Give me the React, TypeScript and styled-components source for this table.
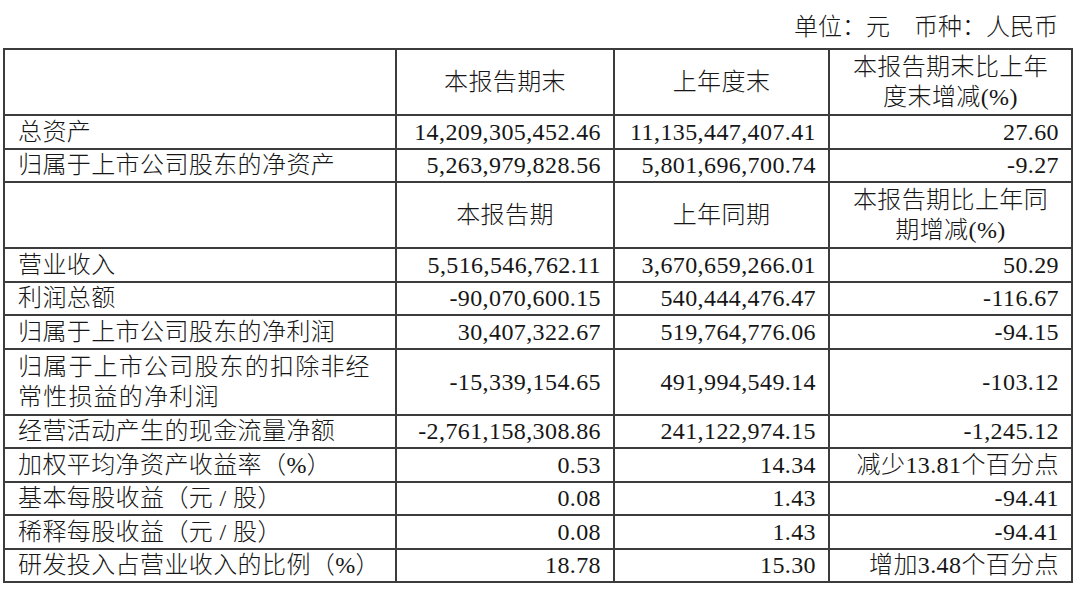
import { Fragment } from "react";
import { createGlobalStyle, styled } from "styled-components";

type Row = {
  label: string;
  values: [string, string, string];
  tall?: boolean;
  spread?: boolean;
};

type Section = {
  headers: [string, string, string];
  rows: Row[];
};

const columnWidths = [392, 218, 215, 243];

const sections: Section[] = [
  {
    headers: ["本报告期末", "上年度末", "本报告期末比上年\n度末增减(%)"],
    rows: [
      { label: "总资产", values: ["14,209,305,452.46", "11,135,447,407.41", "27.60"] },
      {
        label: "归属于上市公司股东的净资产",
        values: ["5,263,979,828.56", "5,801,696,700.74", "-9.27"],
      },
    ],
  },
  {
    headers: ["本报告期", "上年同期", "本报告期比上年同\n期增减(%)"],
    rows: [
      { label: "营业收入", values: ["5,516,546,762.11", "3,670,659,266.01", "50.29"] },
      { label: "利润总额", values: ["-90,070,600.15", "540,444,476.47", "-116.67"] },
      {
        label: "归属于上市公司股东的净利润",
        values: ["30,407,322.67", "519,764,776.06", "-94.15"],
      },
      {
        label: "归属于上市公司股东的扣除非经\n常性损益的净利润",
        values: ["-15,339,154.65", "491,994,549.14", "-103.12"],
        tall: true,
        spread: true,
      },
      {
        label: "经营活动产生的现金流量净额",
        values: ["-2,761,158,308.86", "241,122,974.15", "-1,245.12"],
      },
      {
        label: "加权平均净资产收益率（%）",
        values: ["0.53", "14.34", "减少13.81个百分点"],
      },
      { label: "基本每股收益（元 / 股）", values: ["0.08", "1.43", "-94.41"] },
      { label: "稀释每股收益（元 / 股）", values: ["0.08", "1.43", "-94.41"] },
      {
        label: "研发投入占营业收入的比例（%）",
        values: ["18.78", "15.30", "增加3.48个百分点"],
      },
    ],
  },
];

const GlobalStyle = createGlobalStyle`
  body {
    margin: 0;
    background: #fff;
  }
`;

const Page = styled.div`
  width: 1080px;
  height: 598px;
  padding: 0 0 0 3px;
  box-sizing: border-box;
  color: #161616;
  font-family: "Liberation Serif", "Noto Sans CJK SC", serif;
  font-size: 24px;
  font-weight: 300;
`;

const UnitLine = styled.div`
  height: 48px;
  padding: 12px 22px 0 0;
  box-sizing: border-box;
  line-height: 30px;
  text-align: right;
  white-space: pre;
`;

const Table = styled.table`
  width: 1068px;
  table-layout: fixed;
  border-collapse: collapse;
  border: 2px solid #3c3c3c;
`;

const Col = styled.col<{ $w: number }>`
  width: ${({ $w }) => $w}px;
`;

const Cell = styled.td<{ $align?: "left" | "right" | "center"; $tall?: boolean; $spread?: boolean }>`
  height: ${({ $tall }) => ($tall ? "64px" : "31.5px")};
  padding: ${({ $align }) =>
    $align === "left" ? "0 0 0 13px" : $align === "right" ? "0 12px 0 0" : "0"};
  border: 2px solid #3c3c3c;
  line-height: 30px;
  letter-spacing: ${({ $spread }) => ($spread ? "1.2px" : "0.4px")};
  text-align: ${({ $align }) => $align ?? "left"};
  vertical-align: middle;
  white-space: pre;
  overflow: hidden;
`;

const Line = styled.div`
  display: block;
`;

const Lines = ({ text }: { text: string }) => (
  <>
    {text.split("\n").map((line, i) => (
      <Line key={i}>{line}</Line>
    ))}
  </>
);

const App = () => {
  return (
    <Page>
      <GlobalStyle />
      <UnitLine>单位：元　币种：人民币</UnitLine>
      <Table>
        <colgroup>
          {columnWidths.map((w, i) => (
            <Col key={i} $w={w} />
          ))}
        </colgroup>
        <tbody>
          {sections.map((section, si) => (
            <Fragment key={si}>
              <tr>
                <Cell $tall />
                {section.headers.map((h, hi) => (
                  <Cell key={hi} $align="center" $tall>
                    <Lines text={h} />
                  </Cell>
                ))}
              </tr>
              {section.rows.map((row, ri) => (
                <tr key={ri}>
                  <Cell $align="left" $tall={row.tall} $spread={row.spread}>
                    <Lines text={row.label} />
                  </Cell>
                  {row.values.map((v, vi) => (
                    <Cell key={vi} $align="right" $tall={row.tall}>
                      {v}
                    </Cell>
                  ))}
                </tr>
              ))}
            </Fragment>
          ))}
        </tbody>
      </Table>
    </Page>
  );
};

export default App;
